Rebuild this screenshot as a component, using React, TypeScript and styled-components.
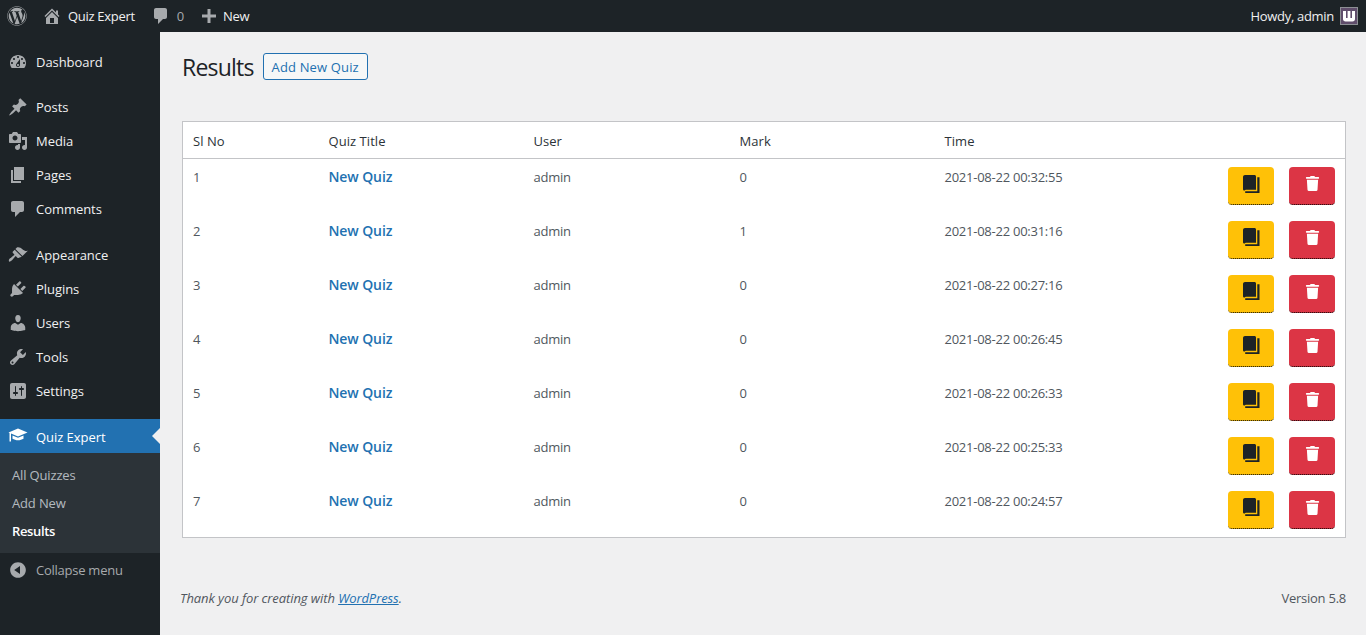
import React from "react";
import styled, { createGlobalStyle } from "styled-components";
import { FaWordpress, FaTrash } from "react-icons/fa";

const Global = createGlobalStyle`
  html, body { margin: 0; padding: 0; background: #f0f0f1; }
  body { font-family: "Open Sans", "Noto Sans", sans-serif; font-size: 13px; color: #3c434a; overflow: hidden; }
  * { box-sizing: border-box; }
`;

const Page = styled.div`
  width: 1366px;
  height: 635px;
  display: flex;
  flex-direction: column;
  overflow: hidden;
`;

const TopBar = styled.header`
  height: 32px;
  flex: none;
  background: #1d2327;
  color: #f0f0f1;
  display: flex;
  align-items: center;
  justify-content: space-between;
  padding: 0 8px 0 7px;
`;

const BarGroup = styled.div`
  display: flex;
  align-items: center;
`;

const BarItem = styled.span<{ $gap?: number; $after?: number }>`
  display: flex;
  align-items: center;
  gap: ${(p) => p.$gap ?? 6}px;
  margin-right: ${(p) => p.$after ?? 0}px;
  font-size: 13px;
  letter-spacing: -0.3px;
  white-space: nowrap;
`;

const BarIcon = styled.svg`
  width: 20px;
  height: 20px;
  fill: #a7aaad;
  flex: none;
`;

const Muted = styled.span`
  color: #a7aaad;
`;

const Avatar = styled.span`
  width: 18px;
  height: 18px;
  margin-left: 6px;
  background: #5f4d6b;
  border: 1px solid #8c8f94;
  display: flex;
  align-items: center;
  justify-content: center;
`;

const Body = styled.div`
  flex: 1;
  display: flex;
  min-height: 0;
`;

const Sidebar = styled.nav`
  width: 160px;
  flex: none;
  background: #1d2327;
  padding-top: 13px;
  display: flex;
  flex-direction: column;
`;

const MenuItem = styled.div<{ $gapAfter?: number }>`
  height: 34px;
  display: flex;
  align-items: center;
  gap: 8px;
  padding-left: 8px;
  margin-bottom: ${(p) => p.$gapAfter ?? 0}px;
  color: #f0f0f1;
  font-size: 13px;
  letter-spacing: -0.05px;
`;

const ActiveItem = styled(MenuItem)`
  position: relative;
  background: #2271b1;
  color: #fff;
  &::after {
    content: "";
    position: absolute;
    right: 0;
    top: 50%;
    margin-top: -8px;
    border: 8px solid transparent;
    border-right-color: #f0f0f1;
    border-left-width: 0;
  }
`;

const ActiveLabel = styled.span`
  padding-top: 2px;
`;

const MenuIcon = styled.svg<{ $light?: boolean }>`
  width: 20px;
  height: 20px;
  flex: none;
  fill: ${(p) => (p.$light ? "#fff" : "#a7aaad")};
`;

const SubMenu = styled.div`
  background: #2c3338;
  padding: 8px 0 8px;
  display: flex;
  flex-direction: column;
`;

const SubItem = styled.div<{ $current?: boolean }>`
  height: 28px;
  display: flex;
  align-items: center;
  padding-left: 12px;
  font-size: 13px;
  letter-spacing: ${(p) => (p.$current ? "-0.35px" : "-0.15px")};
  color: ${(p) => (p.$current ? "#fff" : "rgba(240,246,252,0.7)")};
  font-weight: ${(p) => (p.$current ? 600 : 400)};
`;

const Collapse = styled(MenuItem)`
  color: #a7aaad;
  font-size: 13px;
  letter-spacing: -0.25px;
`;

const Content = styled.main`
  flex: 1;
  min-width: 0;
  padding: 0 20px 0 22px;
  display: flex;
  flex-direction: column;
`;

const Heading = styled.div`
  display: flex;
  align-items: center;
  gap: 9px;
  height: 70px;
  margin-bottom: 19px;
`;

const Title = styled.h1`
  margin: 0;
  font-size: 23px;
  font-weight: 400;
  letter-spacing: -0.8px;
  color: #1d2327;
`;

const AddButton = styled.a`
  height: 27px;
  margin-bottom: 2px;
  padding: 2px 8px 0;
  display: flex;
  align-items: center;
  border: 1px solid #2271b1;
  border-radius: 3px;
  background: #f6f7f7;
  color: #2271b1;
  font-size: 13px;
  font-weight: 500;
  letter-spacing: 0.15px;
`;

const Table = styled.table`
  width: 100%;
  border-collapse: collapse;
  table-layout: fixed;
  background: #fff;
  border: 1px solid #c3c4c7;
`;

const HeadCell = styled.th<{ $w?: number }>`
  ${(p) => (p.$w ? `width: ${p.$w}px;` : "")}
  height: 37px;
  padding: 2px 10px 0;
  text-align: left;
  font-weight: 400;
  font-size: 13px;
  letter-spacing: 0.05px;
  color: #2c3338;
  border-bottom: 1px solid #c3c4c7;
`;

const Row = styled.tr`
  &:last-child td {
    height: 55px;
  }
`;

const Cell = styled.td`
  height: 54px;
  padding: 8px 10px 0;
  vertical-align: top;
  font-size: 13px;
  letter-spacing: -0.25px;
  color: #50575e;
  line-height: 20px;
`;

const QuizLink = styled.a`
  color: #2271b1;
  font-weight: 600;
  font-size: 14px;
  letter-spacing: -0.1px;
`;

const Actions = styled.div`
  display: flex;
  justify-content: flex-end;
  gap: 15px;
`;

const ActionButton = styled.span<{ $bg: string; $fg: string }>`
  width: 46px;
  height: 38px;
  border-radius: 4px;
  background: ${(p) => p.$bg};
  color: ${(p) => p.$fg};
  border-bottom: 1px dotted #000;
  display: flex;
  align-items: center;
  justify-content: center;
  padding-bottom: 4px;
  font-size: 15px;
`;

const Footer = styled.footer`
  display: flex;
  justify-content: space-between;
  margin-top: 51px;
  margin-left: -2px;
  color: #50575e;
  font-size: 13px;
`;

const Thanks = styled.span`
  font-style: italic;
  letter-spacing: -0.08px;
  a { color: #2271b1; text-decoration: underline; }
`;

const Version = styled.span`
  letter-spacing: -0.25px;
`;

const paths: Record<string, string> = {
  dashboard:
    "M3.76 16h12.48c1.1-1.37 1.76-3.11 1.76-5 0-4.42-3.58-8-8-8s-8 3.58-8 8c0 1.89.66 3.63 1.76 5zM10 4c.55 0 1 .45 1 1s-.45 1-1 1-1-.45-1-1 .45-1 1-1zM6 6c.55 0 1 .45 1 1s-.45 1-1 1-1-.45-1-1 .45-1 1-1zm8 0c.55 0 1 .45 1 1s-.45 1-1 1-1-.45-1-1 .45-1 1-1zm-5.37 5.55L12 7v6c0 1.1-.9 2-2 2s-2-.9-2-2c0-.57.24-1.08.63-1.45zM4 10c.55 0 1 .45 1 1s-.45 1-1 1-1-.45-1-1 .45-1 1-1zm12 0c.55 0 1 .45 1 1s-.45 1-1 1-1-.45-1-1 .45-1 1-1zm-5 3c0-.55-.45-1-1-1s-1 .45-1 1 .45 1 1 1 1-.45 1-1z",
  posts:
    "M10.44 3.02l1.82-1.82 6.36 6.35-1.83 1.82c-1.05-.68-2.48-.57-3.41.36l-.75.75c-.92.93-1.04 2.35-.35 3.41l-1.83 1.82-2.41-2.41-2.8 2.79c-.42.42-3.38 2.71-3.8 2.29s1.86-3.39 2.28-3.81l2.79-2.79L4.1 9.36l1.83-1.82c1.05.69 2.48.57 3.4-.36l.75-.75c.93-.92 1.05-2.35.36-3.41z",
  media:
    "M13 11V4c0-.55-.45-1-1-1h-1.67L9 1H5L3.67 3H2c-.55 0-1 .45-1 1v7c0 .55.45 1 1 1h10c.55 0 1-.45 1-1zM7 4.5c1.38 0 2.5 1.12 2.5 2.5S8.38 9.500 7 9.500 4.500 8.380 4.500 7 5.620 4.500 7 4.500zM14 6h5v10.500c0 1.380-1.120 2.500-2.500 2.500S14 17.880 14 16.500s1.120-2.500 2.500-2.500c.17 0 .34.020.5.050V9h-3V6zm-4 8.050V13h2v3.500c0 1.380-1.120 2.500-2.500 2.500S7 17.880 7 16.500 8.120 14 9.500 14c.17 0 .34.020.5.050z",
  pages: "M6 15V2h10v13H6zm-1 1h8v2H3V5h2v11z",
  comments:
    "M5 2h9c1.1 0 2 .9 2 2v7c0 1.1-.9 2-2 2h-2l-5 5v-5H5c-1.1 0-2-.9-2-2V4c0-1.1.9-2 2-2z",
  appearance:
    "M14.48 11.06L7.41 3.99l1.5-1.5c.5-.56 2.3-.47 3.51.32 1.21.8 1.43 1.28 2.91 2.1 1.18.64 2.45 1.26 4.45.85zm-.71.71L6.7 4.7 4.93 6.47c-.39.39-.39 1.02 0 1.41l1.06 1.06c.39.39.39 1.03 0 1.42-.6.6-1.43 1.11-2.21 1.69-.35.26-.7.53-1.01.84C1.43 13.23.4 14.85 1.02 16.5c.54.57 2.22-.42 3.45-1.65.31-.31.58-.66.85-1.02.57-.77 1.07-1.59 1.66-2.18.39-.39 1.02-.39 1.41 0l1.06 1.06c.39.39 1.02.39 1.41 0z",
  plugins:
    "M13.11 4.36L9.87 7.6 8 5.73l3.24-3.24c.35-.34 1.05-.2 1.56.32.52.51.66 1.21.31 1.55zm-8 1.77l.91-1.12 9.01 9.01-1.19.84c-.71.71-2.63 1.16-3.82 1.16H6.14L4.9 17.26c-.59.59-1.54.59-2.12 0-.59-.58-.59-1.53 0-2.12l1.24-1.24v-3.88c0-1.13.4-3.19 1.09-3.89zm7.26 3.97l3.24-3.24c.34-.35 1.04-.21 1.55.31.52.51.66 1.21.31 1.55l-3.24 3.25z",
  users:
    "M10 9.25c-2.27 0-2.73-3.44-2.73-3.44C7 4.02 7.82 2 9.97 2c2.16 0 2.98 2.02 2.71 3.81 0 0-.41 3.44-2.68 3.44zm0 2.57L12.72 10c2.39 0 4.52 2.33 4.52 4.53v2.49s-3.65 1.13-7.24 1.13c-3.65 0-7.24-1.13-7.24-1.13v-2.49c0-2.25 1.94-4.48 4.47-4.48z",
  tools:
    "M16.68 9.77c-1.34 1.34-3.3 1.67-4.95.99l-5.41 6.52c-.99.99-2.59.99-3.58 0s-.99-2.59 0-3.57l6.52-5.42c-.68-1.65-.35-3.61.99-4.95 1.28-1.28 3.12-1.62 4.72-1.06l-2.89 2.89 2.82 2.82 2.86-2.87c.53 1.58.18 3.39-1.08 4.65zM3.81 16.21c.4.39 1.04.39 1.43 0 .4-.4.4-1.04 0-1.43-.39-.4-1.03-.4-1.43 0-.39.39-.39 1.03 0 1.43z",
  settings:
    "M18 16V4c0-1.1-.9-2-2-2H4c-1.1 0-2 .9-2 2v12c0 1.1.9 2 2 2h12c1.1 0 2-.9 2-2zM8 11h1c.55 0 1 .45 1 1s-.45 1-1 1H8v1.5c0 .28-.22.5-.5.5s-.5-.22-.5-.5V13H6c-.55 0-1-.45-1-1s.45-1 1-1h1V5.5c0-.28.22-.5.5-.5s.5.22.5.5V11zm5-2h-1c-.55 0-1-.45-1-1s.45-1 1-1h1V5.5c0-.28.22-.5.5-.5s.5.22.5.5V7h1c.55 0 1 .45 1 1s-.45 1-1 1h-1v5.5c0 .28-.22.5-.5.5s-.5-.22-.5-.5V9z",
  cap:
    "M10 2.500L.5 6.500l1 .5v8.500H3V7.600l7 2.900 9.500-4zM4.500 9.500v3.200C6 13.600 8 14.200 10 14.200s4-.6 5.500-1.500V9.500L10 11.800z",
  collapse:
    "M10 2.16c4.33 0 7.84 3.51 7.84 7.84s-3.51 7.84-7.84 7.84S2.16 14.33 2.16 10 5.71 2.16 10 2.16zm2 11.72V6.12L6.18 9.97z",
  home:
    "M16 8.5l1.53 1.53-1.06 1.06L10 4.62l-6.47 6.47-1.06-1.06L10 2.5l4 4v-2h2v4zm-6-2.46l6 5.99V18H4v-5.97zM12 17v-5H8v5h4z",
  plus: "M17 8.5v3h-5.5V17h-3v-5.500H3v-3h5.500V3h3v5.500H17z",
};

const Icon = ({ name, light }: { name: string; light?: boolean }) => (
  <MenuIcon viewBox="0 0 20 20" $light={light}>
    <path d={paths[name]} />
  </MenuIcon>
);

const Bar = ({ name }: { name: string }) => (
  <BarIcon viewBox="0 0 20 20">
    <path d={paths[name]} />
  </BarIcon>
);

const BookIcon = () => (
  <svg width="17" height="18" viewBox="0 0 17 18" fill="currentColor">
    <path d="M2 0h9.500c.8 0 1.500.7 1.500 1.500V14.800H3c-.8 0-1.200.3-1.200.8h-.3C.6 15.600 0 15 0 14V2C0 .9.900 0 2 0z" />
    <path d="M14.300 2.300H16.500V18H2.200v-1.700h12.100z" />
  </svg>
);

const menu: { key: string; label: string; after?: number }[] = [
  { key: "dashboard", label: "Dashboard", after: 11 },
  { key: "posts", label: "Posts" },
  { key: "media", label: "Media" },
  { key: "pages", label: "Pages" },
  { key: "comments", label: "Comments", after: 12 },
  { key: "appearance", label: "Appearance" },
  { key: "plugins", label: "Plugins" },
  { key: "users", label: "Users" },
  { key: "tools", label: "Tools" },
  { key: "settings", label: "Settings", after: 11 },
];

const rows: [number, string, number, string][] = [
  [1, "admin", 0, "2021-08-22 00:32:55"],
  [2, "admin", 1, "2021-08-22 00:31:16"],
  [3, "admin", 0, "2021-08-22 00:27:16"],
  [4, "admin", 0, "2021-08-22 00:26:45"],
  [5, "admin", 0, "2021-08-22 00:26:33"],
  [6, "admin", 0, "2021-08-22 00:25:33"],
  [7, "admin", 0, "2021-08-22 00:24:57"],
];

export default function App() {
  return (
    <Page>
      <Global />
      <TopBar>
        <BarGroup>
          <BarItem $after={15}>
            <FaWordpress size={20} color="#a7aaad" />
          </BarItem>
          <BarItem $gap={6} $after={16}>
            <Bar name="home" />
            Quiz Expert
          </BarItem>
          <BarItem $gap={6} $after={15}>
            <Bar name="comments" />
            <Muted>0</Muted>
          </BarItem>
          <BarItem $gap={4}>
            <Bar name="plus" />
            New
          </BarItem>
        </BarGroup>
        <BarGroup>
          <BarItem>Howdy, admin</BarItem>
          <Avatar>
            <svg width="14" height="12" viewBox="0 0 14 12" fill="#fff">
              <path d="M1 1h3v7h1.600V1h2.800v7H10V1h3v8c0 1.500-1 2.500-2.500 2.500h-7C2 11.500 1 10.500 1 9z" />
            </svg>
          </Avatar>
        </BarGroup>
      </TopBar>
      <Body>
        <Sidebar>
          {menu.map((m) => (
            <MenuItem key={m.key} $gapAfter={m.after}>
              <Icon name={m.key} />
              {m.label}
            </MenuItem>
          ))}
          <ActiveItem>
            <Icon name="cap" light />
            <ActiveLabel>Quiz Expert</ActiveLabel>
          </ActiveItem>
          <SubMenu>
            <SubItem>All Quizzes</SubItem>
            <SubItem>Add New</SubItem>
            <SubItem $current>Results</SubItem>
          </SubMenu>
          <Collapse>
            <Icon name="collapse" />
            Collapse menu
          </Collapse>
        </Sidebar>
        <Content>
          <Heading>
            <Title>Results</Title>
            <AddButton>Add New Quiz</AddButton>
          </Heading>
          <Table>
            <thead>
              <tr>
                <HeadCell $w={136}>Sl No</HeadCell>
                <HeadCell $w={205}>Quiz Title</HeadCell>
                <HeadCell $w={206}>User</HeadCell>
                <HeadCell $w={205}>Mark</HeadCell>
                <HeadCell $w={205}>Time</HeadCell>
                <HeadCell />
              </tr>
            </thead>
            <tbody>
              {rows.map(([n, user, mark, time]) => (
                <Row key={n}>
                  <Cell>{n}</Cell>
                  <Cell>
                    <QuizLink>New Quiz</QuizLink>
                  </Cell>
                  <Cell>{user}</Cell>
                  <Cell>{mark}</Cell>
                  <Cell>{time}</Cell>
                  <Cell>
                    <Actions>
                      <ActionButton $bg="#ffc107" $fg="#1d2327">
                        <BookIcon />
                      </ActionButton>
                      <ActionButton $bg="#dc3545" $fg="#fff">
                        <FaTrash />
                      </ActionButton>
                    </Actions>
                  </Cell>
                </Row>
              ))}
            </tbody>
          </Table>
          <Footer>
            <Thanks>
              Thank you for creating with <a>WordPress</a>.
            </Thanks>
            <Version>Version 5.8</Version>
          </Footer>
        </Content>
      </Body>
    </Page>
  );
}
